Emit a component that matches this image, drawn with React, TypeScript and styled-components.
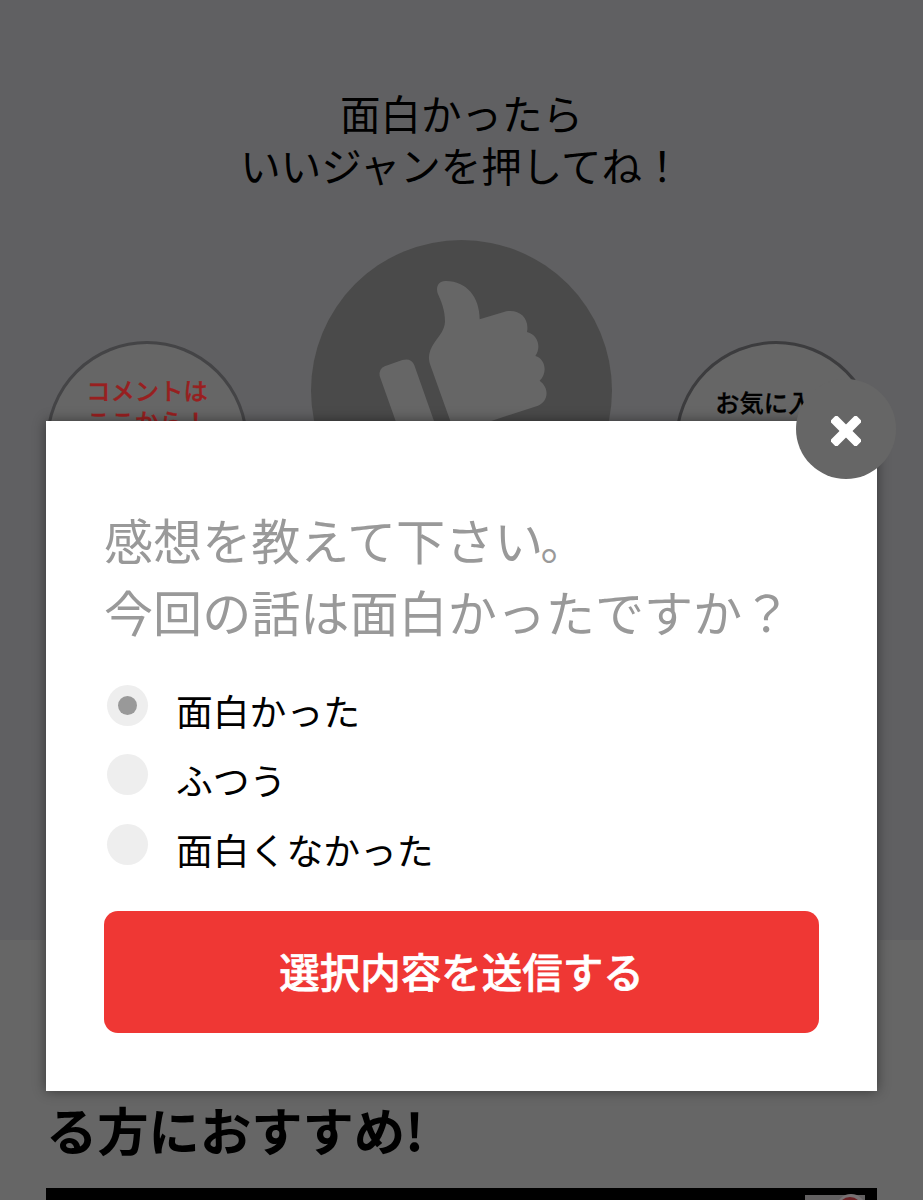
import React, { useState } from 'react'
import styled, { createGlobalStyle } from "styled-components"

const options = ["面白かった", "ふつう", "面白くなかった"]

const App = () => {
  const [selected, setSelected] = useState(0)

  return (
    <Screen>
      <GlobalStyle />
      <Reaction>
        <Lead>面白かったら<br />いいジャンを押してね！</Lead>
        <Buttons>
          <Round $color="#981f20" $line="#444446" $top={30}>コメントは<br />ここから！</Round>
          <Like>
            <svg viewBox="34 30 903 903" width="301" height="301">
              <path d="M440 153C416 151 408 172 414 190C425 215 436 240 436 275C434 302 420 315 404 338C386 365 384 385 393 408L452 573L470 625L575 573L715 527C744 515 752 476 720 452C745 430 737 385 707 378C724 355 718 315 682 306C690 265 660 237 620 244L540 268C540 200 500 154 440 153Z" />
              <path d="M255 409L308 390Q335 383 344 406L403 573L415 610L300 610L288 573L240 438Q237 417 255 409Z" />
            </svg>
          </Like>
          <Round $color="#000" $line="#3c3c3e" $top={42}>お気に入り</Round>
        </Buttons>
      </Reaction>
      <Recommend>
        <RecommendTitle>る方におすすめ!</RecommendTitle>
        <Banner>
          <svg width="60" height="6" viewBox="0 0 60 6">
            <path d="M0 1H60V6H0Z" fill="#626061" />
            <circle cx="46" cy="15" r="15" fill="#777173" />
            <circle cx="45" cy="15" r="12" fill="#6b2226" />
          </svg>
        </Banner>
      </Recommend>

      <Modal>
        <Close>
          <svg width="30" height="30" viewBox="0 0 30 30" fill="#fff">
            <rect x="-3.2" y="10.4" width="36.4" height="9.2" rx="2" transform="rotate(45 15 15)" />
            <rect x="-3.2" y="10.4" width="36.4" height="9.2" rx="2" transform="rotate(-45 15 15)" />
          </svg>
        </Close>
        <Question>感想を教えて下さい<Stop>。</Stop><br />今回の話は面白かったですか？</Question>
        <Options>
          {options.map((label, i) => (
            <Option key={label} onClick={() => setSelected(i)}>
              <Radio>{selected === i && <Dot />}</Radio>
              <Label>{label}</Label>
            </Option>
          ))}
        </Options>
        <Submit>選択内容を送信する</Submit>
      </Modal>
    </Screen>
  )
}

export default App

const GlobalStyle = createGlobalStyle`
* {
box-sizing: border-box;
}
body {
margin: 0;
font-family: "Noto Sans CJK JP", sans-serif;
}
`;

const Screen = styled.div`
position: relative;
width: 923px;
height: 1200px;
overflow: hidden;
background: #666;
color: #000;
`;

const Reaction = styled.div`
height: 940px;
padding-top: 87px;
background: #606062;
`;

const Lead = styled.div`
font-size: 40.5px;
line-height: 51.5px;
text-align: center;
white-space: nowrap;
`;

const Buttons = styled.div`
display: flex;
justify-content: space-between;
align-items: flex-start;
margin-top: 50px;
padding: 0 46px;
`;

const Round = styled.div<{ $color: string; $line: string; $top: number }>`
width: 202px;
height: 202px;
margin-top: 101px;
padding-top: ${(p) => p.$top}px;
border: 3px solid ${(p) => p.$line};
border-radius: 50%;
background: #666;
color: ${(p) => p.$color};
font-size: 24.3px;
font-weight: 500;
-webkit-text-stroke: 0.3px ${(p) => p.$color};
line-height: 31px;
text-align: center;
white-space: nowrap;
`;

const Like = styled.div`
width: 301px;
height: 301px;
border-radius: 50%;
background: #4a4a4a;
fill: #666;
`;

const Recommend = styled.div`
height: 260px;
padding: 151px 46px 0;
background: #666;
`;

const RecommendTitle = styled.div`
height: 97px;
font-size: 51.3px;
font-weight: 700;
line-height: 76px;
white-space: nowrap;
`;

const Banner = styled.div`
display: flex;
justify-content: flex-end;
align-items: flex-end;
height: 12px;
padding-right: 12px;
background: #000;
`;

const Modal = styled.div`
position: absolute;
left: 46px;
top: 421px;
width: 831px;
height: 670px;
padding: 82px 58px 0;
background: #fff;
box-shadow: 0 0 12px rgba(0, 0, 0, 0.45);
`;

const Close = styled.div`
position: absolute;
right: -19px;
top: -42px;
width: 100px;
height: 100px;
border-radius: 50%;
background: #666;
display: flex;
align-items: center;
justify-content: center;
padding-top: 4px;
`;

const Question = styled.div`
color: #999;
font-size: 49.1px;
line-height: 72px;
white-space: nowrap;
`;

const Stop = styled.span`
margin-left: -3px;
font-size: 44px;
line-height: 1;
`;

const Options = styled.div`
display: flex;
flex-direction: column;
gap: 27.4px;
margin-top: 38px;
padding-left: 3px;
`;

const Option = styled.div`
display: flex;
align-items: flex-start;
height: 42px;
`;

const Radio = styled.div`
width: 41px;
height: 41px;
border-radius: 50%;
background: #eee;
display: flex;
align-items: center;
justify-content: center;
`;

const Dot = styled.div`
width: 19px;
height: 19px;
border-radius: 50%;
background: #999;
`;

const Label = styled.div`
margin-left: 28px;
padding-top: 4px;
font-size: 36.8px;
line-height: 42px;
`;

const Submit = styled.div`
display: flex;
align-items: center;
justify-content: center;
height: 122px;
margin-top: 45.4px;
padding-bottom: 4px;
border-radius: 14px;
background: #ef3734;
color: #fff;
font-size: 40.5px;
font-weight: 500;
-webkit-text-stroke: 0.7px #fff;
`;
